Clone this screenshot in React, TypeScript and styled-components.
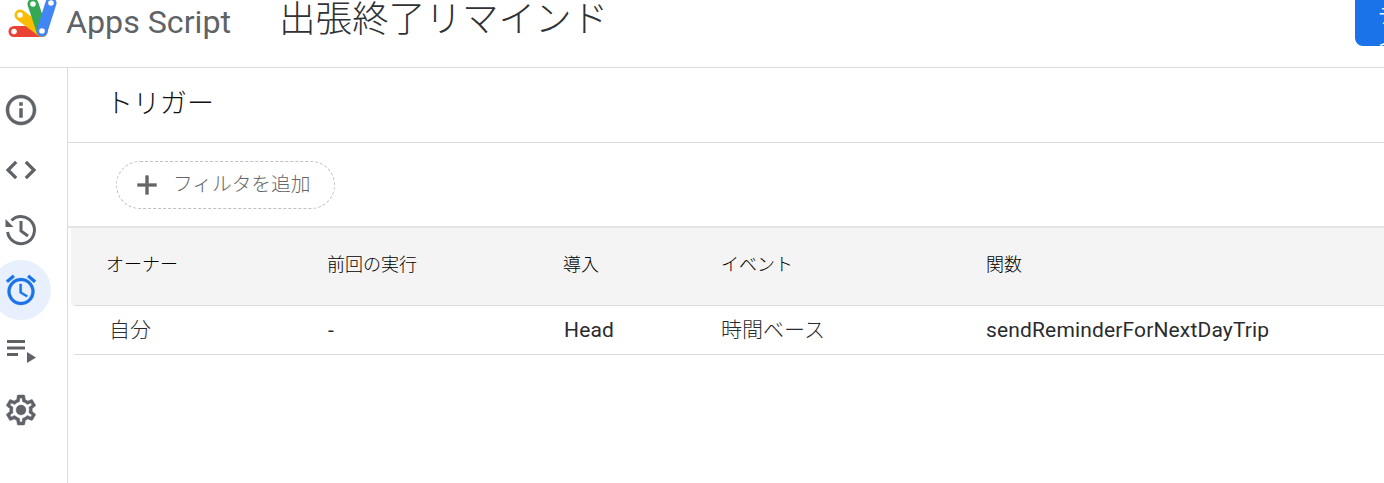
import { createGlobalStyle, styled } from "styled-components";
import { MdAdd, MdAlarm, MdCode, MdInfoOutline } from "react-icons/md";

const GlobalStyle = createGlobalStyle`
  html, body {
    margin: 0;
    height: 100%;
    overflow: hidden;
    background: #fff;
    font-family: "Noto Sans CJK JP", "Liberation Sans", sans-serif;
    color: #202124;
  }
`;

const InfoIcon = ({ size }: { size: number }) => (
  <MdInfoOutline size={size} stroke="currentColor" strokeWidth={0.35} />
);

const CodeIcon = ({ size }: { size: number }) => (
  <MdCode size={size} stroke="currentColor" strokeWidth={0.35} />
);

const AlarmIcon = ({ size }: { size: number }) => (
  <MdAlarm size={size} stroke="currentColor" strokeWidth={0.2} />
);

const HistoryIcon = ({ size }: { size: number }) => (
  <svg width={size} height={size} viewBox="0 0 36 36" fill="none" stroke="currentColor" strokeWidth="3">
    <path d="M4.6 20A13.5 13.5 0 1 0 8.5 8.5" />
    <path d="M2.5 7v8h8z" fill="currentColor" stroke="none" />
    <path d="M18 9v10l7 5" />
  </svg>
);

const PlaylistIcon = ({ size }: { size: number }) => (
  <svg width={size} height={size} viewBox="0 0 36 36" fill="currentColor">
    <path d="M4 8h18v3H4zM4 14.500h18v3H4zM4 21h11v3H4z" />
    <path d="M24 20v11l9-5.500z" />
  </svg>
);

const SettingsIcon = ({ size }: { size: number }) => (
  <svg width={size} height={size} viewBox="0 0 24 24" fill="currentColor" stroke="currentColor" strokeWidth="0.3">
    <path d="M19.43 12.98c.04-.32.07-.64.07-.98 0-.34-.03-.66-.07-.98l2.11-1.65c.19-.15.24-.42.12-.64l-2-3.46c-.09-.16-.26-.25-.44-.25-.06 0-.12.01-.17.03l-2.49 1c-.52-.4-1.08-.73-1.69-.98l-.38-2.65C14.46 2.18 14.25 2 14 2h-4c-.25 0-.46.18-.49.42l-.38 2.65c-.61.25-1.17.59-1.69.98l-2.49-1c-.06-.02-.12-.03-.18-.03-.17 0-.34.09-.43.25l-2 3.46c-.13.22-.07.49.12.64l2.11 1.65c-.04.32-.07.65-.07.98 0 .33.03.66.07.98l-2.11 1.65c-.19.15-.24.42-.12.64l2 3.46c.09.16.26.25.44.25.06 0 .12-.01.17-.03l2.49-1c.52.4 1.08.73 1.69.98l.38 2.65c.03.24.24.42.49.42h4c.25 0 .46-.18.49-.42l.38-2.65c.61-.25 1.17-.59 1.69-.98l2.49 1c.06.02.12.03.18.03.17 0 .34-.09.43-.25l2-3.46c.12-.22.07-.49-.12-.64l-2.11-1.65zM17.45 11.27c.04.31.05.52.05.73 0 .21-.02.43-.05.73l-.14 1.13.89.7 1.08.84-.7 1.21-1.27-.51-1.04-.42-.9.68c-.43.32-.84.56-1.25.73l-1.06.43-.16 1.13-.2 1.35h-1.4l-.19-1.35-.16-1.13-1.06-.43c-.43-.18-.83-.41-1.23-.71l-.91-.7-1.06.43-1.27.51-.7-1.21 1.08-.84.89-.7-.14-1.13c-.03-.31-.05-.54-.05-.74s.02-.43.05-.73l.14-1.13-.89-.7-1.08-.84.7-1.21 1.27.51 1.04.42.9-.68c.43-.32.84-.56 1.25-.73l1.06-.43.16-1.13.2-1.35h1.39l.19 1.35.16 1.13 1.06.43c.43.18.83.41 1.23.71l.91.7 1.06-.43 1.27-.51.7 1.21-1.07.85-.89.7.14 1.13z" />
    <circle cx="12" cy="12" r="3.3" />
  </svg>
);

const navItems = [
  { key: "info", icon: InfoIcon },
  { key: "code", icon: CodeIcon },
  { key: "history", icon: HistoryIcon },
  { key: "triggers", icon: AlarmIcon, active: true },
  { key: "runs", icon: PlaylistIcon },
  { key: "settings", icon: SettingsIcon },
];

const columns = ["オーナー", "前回の実行", "導入", "イベント", "関数"];
const cells = [
  { text: "自分", cjk: true },
  { text: "-" },
  { text: "Head" },
  { text: "時間ベース", cjk: true },
  { text: "sendReminderForNextDayTrip" },
];

const Logo = () => (
  <LogoSvg viewBox="0 0 52 40" aria-hidden="true">
    <line x1="6" y1="31.500" x2="34" y2="31.500" stroke="#ea4335" strokeWidth="11" strokeLinecap="round" />
    <line x1="12" y1="15" x2="34" y2="31.500" stroke="#fbbc04" strokeWidth="11" strokeLinecap="round" />
    <line x1="25" y1="4" x2="34" y2="31" stroke="#34a853" strokeWidth="11" strokeLinecap="round" />
    <line x1="43" y1="3" x2="34" y2="31" stroke="#4285f4" strokeWidth="11" strokeLinecap="round" />
    <circle cx="6" cy="31.500" r="2.800" fill="#fff" />
    <circle cx="12" cy="15" r="2.800" fill="#fff" />
    <circle cx="25" cy="4" r="2.800" fill="#fff" />
    <circle cx="43" cy="3" r="2.800" fill="#fff" />
    <circle cx="34" cy="31" r="2.800" fill="#fff" />
  </LogoSvg>
);

const App = () => {
  return (
    <Page>
      <GlobalStyle />
      <Header>
        <Logo />
        <Brand>Apps Script</Brand>
        <ProjectTitle>出張終了リマインド</ProjectTitle>
        <DeployButton>デプロイ</DeployButton>
      </Header>
      <Body>
        <Sidebar>
          {navItems.map(({ key, icon: Icon, active }) => (
            <NavButton key={key} $active={active}>
              <Icon size={36} />
            </NavButton>
          ))}
        </Sidebar>
        <Main>
          <TitleBar>トリガー</TitleBar>
          <FilterBar>
            <FilterChip>
              <MdAdd size={32} stroke="currentColor" strokeWidth={0.5} />
              <FilterLabel>フィルタを追加</FilterLabel>
            </FilterChip>
          </FilterBar>
          <HeadBand>
            <HeadRow>
              {columns.map((c) => (
                <HeadCell key={c}>{c}</HeadCell>
              ))}
            </HeadRow>
          </HeadBand>
          <DataRow>
            {cells.map((c) => (
              <DataCell key={c.text} $cjk={c.cjk}>
                {c.text}
              </DataCell>
            ))}
          </DataRow>
        </Main>
      </Body>
    </Page>
  );
};

const Page = styled.div`
  display: flex;
  flex-flow: column nowrap;
  width: 1384px;
  height: 483px;
  overflow: hidden;
`;

const Header = styled.header`
  display: flex;
  align-items: flex-start;
  height: 67px;
  flex-shrink: 0;
  border-bottom: 1px solid #dadce0;
  overflow: hidden;
`;

const LogoSvg = styled.svg`
  width: 52px;
  height: 40px;
  flex-shrink: 0;
  margin: 0 0 0 8px;
  overflow: visible;
`;

const Brand = styled.div`
  margin: 1px 0 0 6px;
  width: 215px;
  flex-shrink: 0;
  font-family: "Roboto", "Liberation Sans", sans-serif;
  font-size: 32.2px;
  line-height: 42px;
  color: #5f6368;
`;

const ProjectTitle = styled.div`
  flex: 1 1 0;
  margin-top: -8px;
  margin-left: -2px;
  font-size: 36.6px;
  font-weight: 300;
  line-height: 50px;
  color: #303134;
`;

const DeployButton = styled.button`
  flex-shrink: 0;
  width: 100px;
  height: 46px;
  margin-right: -71px;
  padding: 0 0 0 23px;
  border: 0;
  border-radius: 0 0 0 8px;
  background: #1a73e8;
  color: #fff;
  font: inherit;
  font-size: 20px;
  text-align: left;
`;

const Body = styled.div`
  display: flex;
  flex: 1 1 0;
  min-height: 0;
`;

const Sidebar = styled.nav`
  display: flex;
  flex-flow: column nowrap;
  width: 68px;
  flex-shrink: 0;
  padding-top: 12px;
  box-sizing: border-box;
  border-right: 1px solid #dadce0;
`;

const NavButton = styled.div<{ $active?: boolean }>`
  display: flex;
  align-items: center;
  justify-content: center;
  width: 60px;
  height: 60px;
  margin-left: -9px;
  border-radius: 50%;
  color: ${(p) => (p.$active ? "#1a73e8" : "#5f6368")};
  background: ${(p) => (p.$active ? "#e8f0fe" : "transparent")};

  path[fill="none"] {
    stroke: none;
  }
`;

const Main = styled.main`
  flex: 1 1 0;
  min-width: 0;
`;

const TitleBar = styled.h1`
  display: flex;
  align-items: center;
  height: 75px;
  box-sizing: border-box;
  margin: 0;
  padding: 0 0 7px 38px;
  border-bottom: 1px solid #dadce0;
  font-size: 27px;
  font-weight: 300;
  color: #111;
`;

const FilterBar = styled.div`
  display: flex;
  align-items: center;
  height: 83px;
  padding: 1px 0 0 48px;
  box-sizing: border-box;
`;

const FilterChip = styled.div`
  display: flex;
  align-items: center;
  gap: 10px;
  width: 219px;
  height: 48px;
  box-sizing: border-box;
  padding-left: 14px;
  border: 1px dashed #bdc1c6;
  border-radius: 24px;
  color: #666;

  path[fill="none"] {
    stroke: none;
  }
`;

const FilterLabel = styled.span`
  padding-bottom: 6px;
  font-size: 19.7px;
  font-weight: 300;
`;

const HeadBand = styled.div`
  padding-left: 3px;
  border-top: 2px solid #e4e4e4;
`;

const HeadRow = styled.div`
  display: grid;
  grid-template-columns: 221px 236px 158px 265px 1fr;
  align-items: center;
  height: 77px;
  padding: 0 0 8px 35px;
  box-sizing: border-box;
  background: #f4f4f4;
`;

const HeadCell = styled.div`
  font-size: 18px;
  font-weight: 300;
  color: #000;
`;

const DataRow = styled.div`
  display: grid;
  grid-template-columns: 219px 236px 157px 265px 1fr;
  align-items: center;
  height: 50px;
  margin-left: 6px;
  padding-left: 35px;
  box-sizing: border-box;
  border-top: 1px solid #dadce0;
  border-bottom: 1px solid #dadce0;
`;

const DataCell = styled.div<{ $cjk?: boolean }>`
  padding-bottom: ${(p) => (p.$cjk ? "5px" : "0")};
  font-family: "Roboto", "Noto Sans CJK JP", sans-serif;
  font-size: 21px;
  font-weight: ${(p) => (p.$cjk ? 300 : 400)};
  letter-spacing: ${(p) => (p.$cjk ? "0" : "0.15px")};
  color: #2a2b2e;
`;

export default App;
